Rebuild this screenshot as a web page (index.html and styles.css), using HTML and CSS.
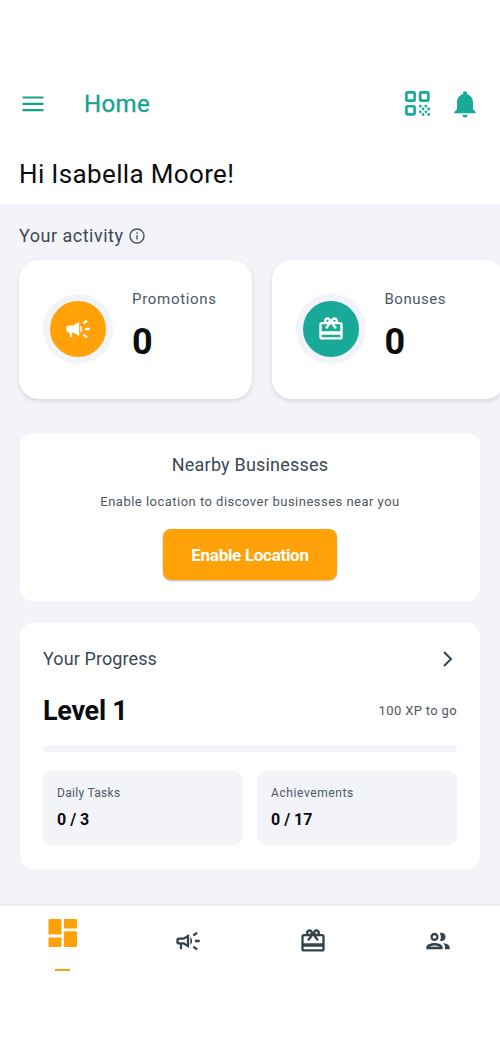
FILE: index.html
```html
<!DOCTYPE html>
<html lang="en">
<head>
<meta charset="utf-8">
<title>Home</title>
<link rel="stylesheet" href="styles.css">
</head>
<body>
<svg class="defs" width="0" height="0">
  <symbol id="gift" viewBox="0 0 24 24"><path d="M20 6h-2.18c.11-.31.18-.65.18-1 0-1.66-1.34-3-3-3-1.05 0-1.96.54-2.5 1.35l-.5.67-.5-.68C10.96 2.54 10.05 2 9 2 7.34 2 6 3.34 6 5c0 .35.07.69.18 1H4c-1.11 0-1.99.89-1.99 2L2 19c0 1.11.89 2 2 2h16c1.11 0 2-.89 2-2V8c0-1.11-.89-2-2-2zm-5-2c.55 0 1 .45 1 1s-.45 1-1 1-1-.45-1-1 .45-1 1-1zM9 4c.55 0 1 .45 1 1s-.45 1-1 1-1-.45-1-1 .45-1 1-1zm11 15H4v-2h16v2zm0-5H4V8h5.08L7 10.83 8.62 12 12 7.4l3.38 4.6L17 10.83 14.92 8H20v6z"/></symbol>
</svg>
<header class="top">
  <div class="appbar">
    <svg class="menu" viewBox="0 0 22 16"><path d="M.5 1.5h21M.5 7.9h21M.5 14.2h21"/></svg>
    <h1 class="title">Home</h1>
    <svg class="qr" viewBox="0 0 26 26">
      <g class="qr-box"><rect x="1.4" y="1.4" width="8.2" height="8.2" rx="1.2"/><rect x="15.2" y="1.4" width="8.2" height="8.2" rx="1.2"/><rect x="1.4" y="15.2" width="8.2" height="8.2" rx="1.2"/></g>
      <path class="qr-dots" d="M15.3 15.2h.01M20.9 15.2h.01M18.1 18h.01M23.7 18h.01M15.3 20.8h.01M20.9 20.8h.01M18.1 23.5h.01M23.7 23.5h.01"/>
    </svg>
    <svg class="bell" viewBox="0 0 24 24"><path d="M12 22.1c1.1 0 2-.9 2-2h-4c0 1.1.89 2 2 2zm6-6.1v-5c0-3.07-1.64-5.64-4.5-6.32V4c0-.83-.67-1.5-1.5-1.5s-1.5.67-1.5 1.5v.68C7.63 5.36 6 7.92 6 11v5l-2 2v1h16v-1l-2-2z"/></svg>
  </div>
  <p class="greeting">Hi Isabella Moore!</p>
</header>

<main class="content">
  <div class="activity-head">
    <h2 class="heading activity-label">Your activity</h2>
    <svg class="info" viewBox="0 0 16 16"><circle cx="8" cy="8" r="7"/><path d="M8 7.2v4.3M8 4.3v1.5"/></svg>
  </div>
  <div class="stats">
    <section class="stat">
      <div class="badge badge-orange"><svg class="icon" viewBox="0 0 24 24"><path d="M18 11v2h4v-2h-4zm-2 6.61c.96.71 2.21 1.65 3.2 2.39.4-.53.8-1.07 1.2-1.6-.99-.74-2.24-1.68-3.2-2.4-.4.54-.8 1.08-1.2 1.61zM20.4 5.6c-.4-.53-.8-1.07-1.2-1.6-.99.74-2.24 1.68-3.2 2.4.4.53.8 1.07 1.2 1.6.96-.72 2.21-1.65 3.2-2.4zM4 9c-1.1 0-2 .9-2 2v2c0 1.1.9 2 2 2h1v4h2v-4h1l5 3V6L8 9H4zm11.5 3c0-1.33-.58-2.53-1.5-3.35v6.69c.92-.81 1.5-2.01 1.5-3.34z"/></svg></div>
      <div><p class="stat-name">Promotions</p><p class="stat-value">0</p></div>
    </section>
    <section class="stat">
      <div class="badge badge-teal"><svg class="icon"><use href="#gift"/></svg></div>
      <div><p class="stat-name bonuses">Bonuses</p><p class="stat-value">0</p></div>
    </section>
  </div>

  <section class="card nearby">
    <h2 class="heading nearby-title">Nearby Businesses</h2>
    <p class="nearby-text">Enable location to discover businesses near you</p>
    <button class="enable">Enable Location</button>
  </section>

  <section class="card progress">
    <div class="row progress-head">
      <h2 class="heading progress-title">Your Progress</h2>
      <svg class="chevron" viewBox="0 0 12 18"><path d="M2 2l7 7-7 7"/></svg>
    </div>
    <div class="row level-row"><p class="level">Level 1</p><p class="xp">100 XP to go</p></div>
    <div class="bar"></div>
    <div class="tiles">
      <div class="tile"><p class="tile-name">Daily Tasks</p><p class="tile-value">0 / 3</p></div>
      <div class="tile"><p class="tile-name achievements">Achievements</p><p class="tile-value">0 / 17</p></div>
    </div>
  </section>
</main>

<nav class="tabs">
  <a class="tab active">
    <svg class="dashboard" viewBox="0 0 30 30"><rect x=".5" y="1" width="13" height="15.5" rx="1.2"/><rect x="16" y="1" width="13" height="9.5" rx="1.2"/><rect x=".5" y="19.5" width="13" height="9.5" rx="1.2"/><rect x="16" y="13.3" width="13" height="15.7" rx="1.2"/></svg>
    <span class="mark"></span>
  </a>
  <a class="tab"><svg class="icon" viewBox="0 0 24 24"><path fill-rule="evenodd" d="M18 11v2h4v-2h-4zm-2 6.61c.96.71 2.21 1.65 3.2 2.39.4-.53.8-1.07 1.2-1.6-.99-.74-2.24-1.68-3.2-2.4-.4.54-.8 1.08-1.2 1.61zM20.4 5.6c-.4-.53-.8-1.07-1.2-1.6-.99.74-2.24 1.68-3.2 2.4.4.53.8 1.07 1.2 1.6.96-.72 2.21-1.65 3.2-2.4zM4 9c-1.1 0-2 .9-2 2v2c0 1.1.9 2 2 2h1v4h2v-4h1l5 3V6L8 9H4zm5.03 1.71L11 9.53v4.94l-1.97-1.18-.48-.29H4v-2h4.55l.48-.29zM15.5 12c0-1.33-.58-2.53-1.5-3.35v6.69c.92-.81 1.5-2.01 1.5-3.34z"/></svg></a>
  <a class="tab"><svg class="icon"><use href="#gift"/></svg></a>
  <a class="tab"><svg class="icon" viewBox="0 0 24 24"><path d="M9 13.75c-2.34 0-7 1.17-7 3.5V19h14v-1.75c0-2.33-4.66-3.5-7-3.5zM4.34 17c.84-.58 2.87-1.25 4.66-1.25s3.82.67 4.66 1.25H4.34zM9 12c1.93 0 3.5-1.57 3.5-3.5S10.93 5 9 5 5.5 6.57 5.5 8.5 7.07 12 9 12zm0-5c.83 0 1.5.67 1.5 1.5S9.83 10 9 10s-1.5-.67-1.5-1.5S8.17 7 9 7zm7.04 6.81c1.16.84 1.96 1.96 1.96 3.44V19h4v-1.75c0-2.02-3.5-3.17-5.96-3.44zM15 12c1.93 0 3.5-1.57 3.5-3.5S16.93 5 15 5c-.54 0-1.04.13-1.5.35.63.89 1 1.98 1 3.15s-.37 2.26-1 3.15c.46.22.96.35 1.5.35z"/></svg></a>
</nav>
</body>
</html>
```

FILE: styles.css
```css
* { box-sizing: border-box; margin: 0; padding: 0; }
body { width: 500px; height: 1056px; overflow: hidden; background: #fff; font-family: Roboto, "Liberation Sans", sans-serif; color: #0b0d0e; }
svg { display: block; flex: none; }
.defs { position: absolute; }
p, h1, h2 { white-space: nowrap; }

.top { height: 204px; padding-top: 80px; }
.appbar { display: flex; align-items: center; height: 47px; padding: 0 19px 0 22px; }
.menu { width: 22px; height: 16px; fill: none; stroke: #16a190; stroke-width: 2.2; }
.title { margin-left: 40px; flex: 1; font-size: 24px; font-weight: 400; line-height: 28px; letter-spacing: .4px; color: #16a190; -webkit-text-stroke: .3px #16a190; }
.qr { width: 26px; height: 26px; margin-right: 18px; }
.qr-box { fill: none; stroke: #18a999; stroke-width: 2.6; }
.qr-dots { stroke: #18a999; stroke-width: 2.8; stroke-linecap: round; }
.bell { width: 32px; height: 32px; fill: #18a999; }
.greeting { padding: 31px 0 0 19px; font-size: 26px; line-height: 32px; letter-spacing: .35px; }

.content { height: 702px; background: #f3f4fa; padding: 18px 20px 0; overflow: hidden; }
.heading { font-size: 18px; font-weight: 400; line-height: 26px; color: #3b4854; }
.activity-head { display: flex; align-items: center; gap: 6px; height: 28px; margin-left: -1px; }
.activity-label { letter-spacing: .5px; }
.info { width: 16px; height: 16px; fill: none; stroke: #4c5359; stroke-width: 1.4; }
.stats { display: flex; gap: 19.5px; margin: 10px 0 0 -1px; }
.stat { flex: none; width: 233px; height: 139px; border-radius: 20px; background: #fff; box-shadow: 0 2px 4px #d5d6de; display: flex; padding: 28px 0 0 24px; gap: 19px; }
.badge { width: 70px; height: 70px; margin-top: 6px; border: 7px solid #f3f4fa; border-radius: 50%; display: flex; align-items: center; justify-content: center; }
.badge-orange { background: #ffa107; }
.badge-teal { background: #18a999; }
.icon { width: 28px; height: 28px; fill: currentColor; }
.badge .icon { color: #fff; }
.stat-name { font-size: 15px; line-height: 22px; letter-spacing: .7px; color: #4c5864; }
.bonuses { letter-spacing: .5px; }
.stat-value { margin-top: 12px; font-size: 36px; font-weight: 700; line-height: 40px; }

.card { background: #fff; border-radius: 13px; }
.nearby { height: 168px; margin-top: 34px; padding-top: 19px; display: flex; flex-direction: column; align-items: center; }
.nearby-title { letter-spacing: .2px; }
.nearby-text { margin-top: 14px; font-size: 13px; line-height: 20px; letter-spacing: .48px; color: #4c5864; }
.enable { width: 174px; height: 51px; margin-top: 17px; border: 0; border-radius: 8px; background: #ffa107; color: #fff; font: 700 17px/24px Roboto, sans-serif; letter-spacing: -.3px; box-shadow: 0 1px 2px #b9babf; }

.progress { height: 246px; margin-top: 22px; padding: 22px 23px 0; }
.row { display: flex; justify-content: space-between; align-items: center; }
.progress-head { height: 28px; }
.progress-title { letter-spacing: .1px; }
.chevron { width: 12px; height: 18px; margin-right: 3px; fill: none; stroke: #34424c; stroke-width: 2; }
.level-row { height: 38px; margin-top: 19px; }
.level { font-size: 27px; font-weight: 700; line-height: 36px; letter-spacing: -.3px; }
.xp { font-size: 13px; line-height: 20px; color: #4c5864; letter-spacing: .35px; }
.bar { height: 7px; margin-top: 15px; border-radius: 4px; background: #f3f4fa; }
.tiles { display: grid; grid-template-columns: 1fr 1fr; gap: 14px; margin-top: 19px; }
.tile { height: 74px; padding: 13px 14px; border-radius: 9px; background: #f3f4fa; }
.tile-name { font-size: 12px; line-height: 18px; letter-spacing: .3px; color: #4c5864; }
.achievements { letter-spacing: .6px; }
.tile-value { margin-top: 7px; font-size: 16px; font-weight: 700; line-height: 22px; }

.tabs { position: relative; display: grid; grid-template-columns: repeat(4, 1fr); height: 70px; background: #fff; box-shadow: 0 -1px 2px #e7e8ee; }
.tab { display: flex; flex-direction: column; align-items: center; padding-top: 21px; color: #34424c; }
.active { padding-top: 12px; color: #ffa107; }
.dashboard { width: 30px; height: 30px; fill: currentColor; }
.mark { width: 15px; height: 1.5px; margin-top: 21px; background: #ffa107; }
```
